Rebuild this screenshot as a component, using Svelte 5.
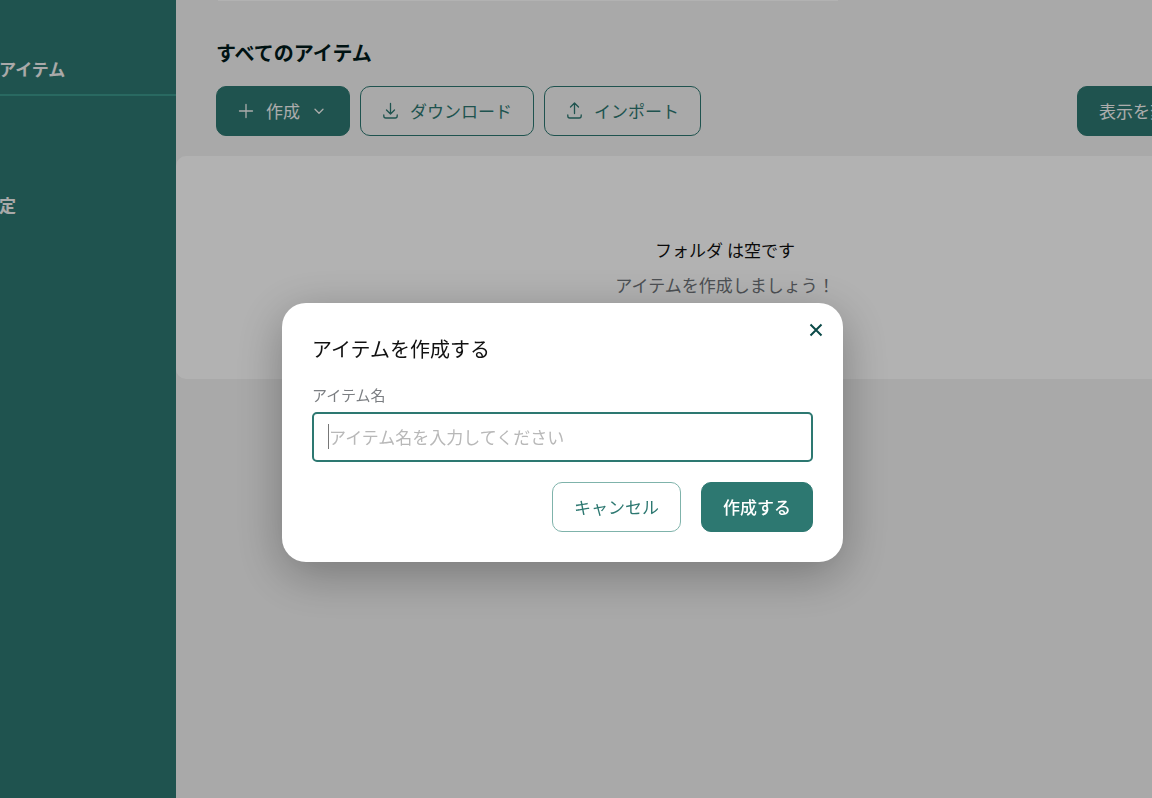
<script lang="ts">
  let itemName = $state('');
  let open = $state(true);
</script>

<div class="app">
  <nav class="sidebar" aria-label="メニュー">
    <a class="nav-link current" href="#items">アイテム</a>
    <a class="nav-link settings" href="#settings">定</a>
  </nav>

  <main>
    <div class="previous"></div>
    <header>
      <h1>すべてのアイテム</h1>
      <div class="toolbar">
        <button class="btn solid create" type="button" onclick={() => (open = true)}>
          <svg width="18" height="18" viewBox="0 0 18 18"><path d="M8 2.5v13M1.5 9h13" /></svg>
          作成
          <svg class="chevron" width="18" height="18" viewBox="0 0 18 18"><path d="M5 7.3l4 4 4-4" /></svg>
        </button>
        <button class="btn outline" type="button">
          <svg width="18" height="18" viewBox="0 0 18 18"><path d="M8.5 1.5v10.3M4.5 8l4 4 4-4M1.8 13v1a2 2 0 0 0 2 2h9.4a2 2 0 0 0 2-2V13" /></svg>
          ダウンロード
        </button>
        <button class="btn outline" type="button">
          <svg width="18" height="18" viewBox="0 0 18 18"><path d="M8.5 11.5V1.2M4.5 5l4-4 4 4M1.8 13v1a2 2 0 0 0 2 2h9.4a2 2 0 0 0 2-2V13" /></svg>
          インポート
        </button>
        <button class="btn solid view" type="button">
          表示を変更
          <svg class="chevron" width="18" height="18" viewBox="0 0 18 18"><path d="M5 7.3l4 4 4-4" /></svg>
        </button>
      </div>
    </header>
    <section class="panel">
      <p class="empty">フォルダ は空です</p>
      <p class="hint">アイテムを作成しましょう！</p>
    </section>
  </main>
</div>

{#if open}
  <div class="backdrop">
    <form class="dialog" role="dialog" aria-modal="true" aria-labelledby="dialog-title" onsubmit={(e) => e.preventDefault()}>
      <button class="close" type="button" aria-label="閉じる" onclick={() => (open = false)}>
        <svg width="14" height="14" viewBox="0 0 14 14"><path d="M1.5 1.5l11 11M12.5 1.5l-11 11" /></svg>
      </button>
      <h2 id="dialog-title">アイテムを作成する</h2>
      <label for="item-name">アイテム名</label>
      <div class="field">
        <input id="item-name" type="text" placeholder="アイテム名を入力してください" bind:value={itemName} />
        {#if !itemName}<span class="caret"></span>{/if}
      </div>
      <div class="actions">
        <button class="btn cancel" type="button" onclick={() => (open = false)}>キャンセル</button>
        <button class="btn submit" type="submit">作成する</button>
      </div>
    </form>
  </div>
{/if}

<style>
  :global(body) {
    margin: 0;
    background: #f2f2f2;
  }
  .app,
  .backdrop {
    font-family: 'Noto Sans CJK JP', sans-serif;
    font-size: 17px;
    line-height: 24px;
    color: #111;
  }
  .app {
    display: flex;
    min-height: 100vh;
    overflow: hidden;
  }
  button,
  input {
    font: inherit;
    box-sizing: border-box;
  }
  svg {
    flex: none;
    fill: none;
    stroke: currentColor;
    stroke-width: 1.3;
    stroke-linecap: round;
    stroke-linejoin: round;
  }
  .sidebar {
    flex: 0 0 176px;
    display: flex;
    flex-direction: column;
    background: #2d7871;
  }
  .nav-link {
    margin-left: -1px;
    color: #f2f2f2;
    font-weight: 700;
    text-decoration: none;
  }
  .current {
    padding: 57px 0 13px;
    border-bottom: 2px solid #3c978c;
  }
  .settings {
    padding-top: 97px;
  }
  /* The content area is wider than the window and runs past its right edge. */
  main {
    flex: 0 0 calc(100% - 54px);
    background: #f2f2f2;
  }
  .previous {
    width: 620px;
    height: 1px;
    margin-left: 42px;
    background: #fff;
  }
  header {
    padding: 38px 40px 20px;
  }
  h1,
  h2,
  p {
    margin: 0;
  }
  h1 {
    font-size: 20px;
    line-height: 28px;
    font-weight: 700;
    color: #001a1a;
  }
  .toolbar {
    display: flex;
    gap: 10px;
    margin-top: 19px;
  }
  .btn {
    display: inline-flex;
    align-items: center;
    gap: 10px;
    height: 50px;
    padding: 0 21px;
    border: 1px solid #2d7871;
    border-radius: 10px;
    white-space: nowrap;
    cursor: pointer;
  }
  .solid {
    background: #2d7871;
    color: #f6f6f6;
  }
  .outline {
    background: transparent;
    color: #2d7871;
  }
  .view {
    margin-left: auto;
  }
  .panel {
    padding: 82px 0;
    border-radius: 10px;
    background: #fff;
    text-align: center;
  }
  .hint {
    margin-top: 11px;
    color: #6e7378;
  }
  .backdrop {
    position: fixed;
    inset: 0;
    display: flex;
    align-items: center;
    justify-content: center;
    padding: 66px 27px 0 0;
    background: rgba(0, 0, 0, 0.3);
  }
  .dialog {
    position: relative;
    box-sizing: border-box;
    width: 561px;
    max-width: 100%;
    padding: 30px;
    border-radius: 24px;
    background: #fff;
    box-shadow: 0 12px 48px rgba(0, 0, 0, 0.3);
  }
  .close {
    position: absolute;
    top: 15px;
    right: 15px;
    display: flex;
    padding: 5px;
    border: 0;
    background: none;
    color: #0b4a48;
    cursor: pointer;
  }
  .close svg {
    stroke-width: 2;
    stroke-linecap: butt;
  }
  h2 {
    font-size: 20px;
    line-height: 32px;
    font-weight: 400;
  }
  label {
    display: block;
    margin-top: 19px;
    font-size: 15px;
    line-height: 22px;
    color: #7b7e82;
  }
  .field {
    position: relative;
    margin-top: 6px;
  }
  input {
    display: block;
    width: 100%;
    height: 50px;
    padding: 0 15px;
    border: 2px solid #2d7871;
    border-radius: 5px;
    outline: none;
    background: #fff;
    color: #111;
  }
  input::placeholder {
    color: #b8b8b8;
    opacity: 1;
  }
  .caret {
    position: absolute;
    left: 16px;
    top: 12px;
    width: 1px;
    height: 25px;
    background: #777;
  }
  .actions {
    display: flex;
    justify-content: flex-end;
    gap: 20px;
    margin-top: 20px;
  }
  .cancel {
    border-color: #7fb3ab;
    background: #fff;
    color: #2d7871;
  }
  .submit {
    background: #2d7871;
    color: #fff;
    font-weight: 500;
  }
</style>
